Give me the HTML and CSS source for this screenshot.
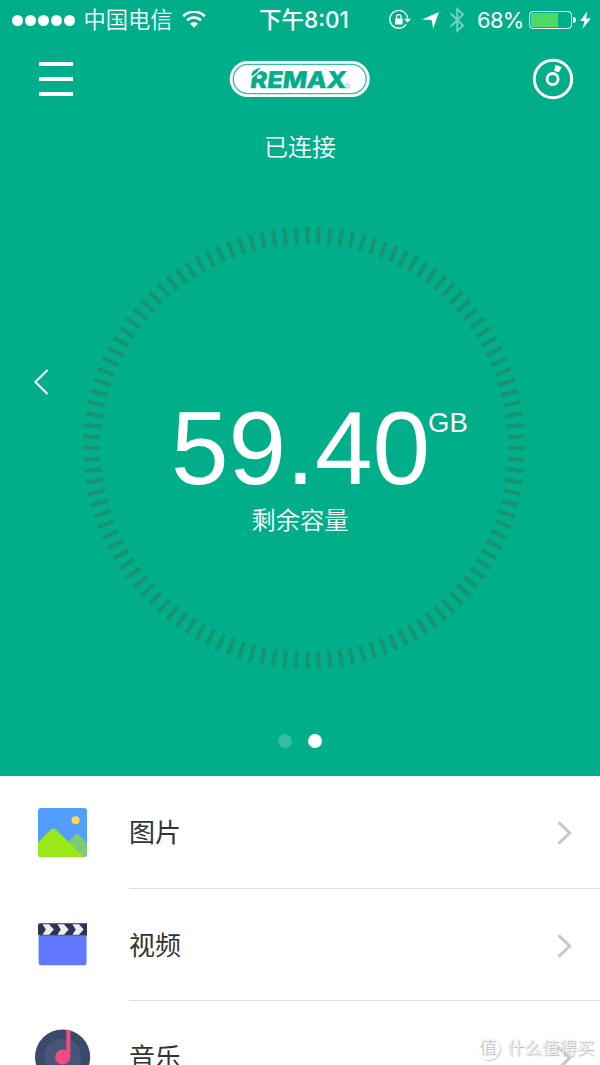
FILE: index.html
```
<!DOCTYPE html>
<html lang="zh-CN">
<head>
  <meta charset="UTF-8" />
  <meta name="viewport" content="width=device-width, initial-scale=1" />
  <title>REMAX</title>
  <link rel="stylesheet" href="styles.css">
</head>
<body>
  <div class="hero">
    <div class="status-bar">
      <div class="status-left">
        <div class="signal"><i></i><i></i><i></i><i></i><i></i></div>
        <span class="carrier">中国电信</span>
        <svg class="wifi" width="24" height="18" viewBox="0 0 24 18">
          <path d="M1.2 5.2a15.5 15.5 0 0 1 21.6 0" fill="none" stroke="#fff" stroke-width="2.6"/>
          <path d="M5 9.4a10 10 0 0 1 14 0" fill="none" stroke="#fff" stroke-width="2.5"/>
          <path d="M12 16.8 7.9 12.6a6 6 0 0 1 8.2 0z" fill="#fff"/>
        </svg>
      </div>
      <div class="time">下午8:01</div>
      <div class="status-right">
        <svg width="22" height="20" viewBox="0 0 22 20">
          <path d="M17.2 14.2a8.9 8.9 0 1 1 1.4-5.5" fill="none" stroke="#fff" stroke-width="1.3"/>
          <path d="M15 8.8h7l-3.5 4z" fill="#fff"/>
          <rect x="6" y="8.6" width="7.6" height="5.8" rx=".6" fill="#fff"/>
          <path d="M7.5 9V6.9a2.3 2.3 0 0 1 4.6 0V9" fill="none" stroke="#fff" stroke-width="1.2"/>
        </svg>
        <svg class="arrow" width="17" height="17" viewBox="0 0 17 17">
          <path d="M16.9 0 11.2 16.8 9.6 8.1 0 7.6z" fill="#fff"/>
        </svg>
        <svg class="bluetooth" width="15" height="26" viewBox="0 0 15 26">
          <path d="M.8 6.5 13 18.6 7.2 24V2L13 7.4.8 19.5" fill="none" stroke="#fff" stroke-width="1.9"/>
        </svg>
        <span class="percent">68%</span>
        <div class="battery"><span></span></div>
        <i class="nub"></i>
        <svg class="bolt" width="11" height="18" viewBox="0 0 11 18">
          <path d="M7.2.2.2 9.9h4.3L2.6 17.8 10.8 7.4H6.1z" fill="#fff"/>
        </svg>
      </div>
    </div>

    <div class="nav">
      <div class="menu"><i></i><i></i><i></i></div>
      <svg class="logo" width="142" height="38" viewBox="0 0 142 38">
        <rect x=".7" y="1" width="140" height="36" rx="18" fill="#fff"/>
        <rect x="4.2" y="4.4" width="133" height="29.2" rx="14.6" fill="#fff" stroke="#35bd9d" stroke-width="1.3"/>
        <text class="logo-text" transform="translate(20.5 27.8) skewX(-7)" textLength="96" lengthAdjust="spacingAndGlyphs">REMAX</text>
        <path d="M20 20 32 9.5" stroke="#fff" stroke-width="1.4"/>
        <path d="M22.3 14.5Q24 9 32 7.8L23 16z" fill="#01ae8a"/>
        <circle cx="118.3" cy="26" r="2" fill="none" stroke="#7ad3be" stroke-width="1"/>
      </svg>
      <svg class="disc" width="42" height="42" viewBox="0 0 42 42">
        <circle cx="21" cy="21" r="18.7" fill="none" stroke="#fff" stroke-width="3"/>
        <circle cx="20.6" cy="21" r="5.5" fill="none" stroke="#fff" stroke-width="2.8"/>
        <path d="M23.6 6.8 29.7 9.2 26.8 14.3 22.2 12.9z" fill="#fff"/>
      </svg>
    </div>

    <div class="connected">已连接</div>

    <div class="dial-row">
      <svg class="prev" width="17" height="28" viewBox="0 0 17 28">
        <path d="M14.5 2 2.4 14l12.1 12" fill="none" stroke="#fff" stroke-width="2"/>
      </svg>
      <div class="dial">
        <svg id="ticks" width="446" height="446" viewBox="-223 -223 446 446"></svg>
        <div class="reading">
          <div class="amount"><span>59.40</span><sup>GB</sup></div>
          <div class="caption">剩余容量</div>
        </div>
      </div>
    </div>

    <div class="pager"><i></i><i class="active"></i></div>
  </div>

  <div class="list">
    <div class="item">
      <svg class="icon" width="56" height="56" viewBox="0 0 56 56">
        <defs><clipPath id="photo"><rect x="3" y="4" width="49" height="49" rx="3"/></clipPath></defs>
        <g clip-path="url(#photo)">
          <rect x="3" y="4" width="50" height="50" fill="#529dff"/>
          <circle cx="40.6" cy="16.2" r="4" fill="#fddb4b"/>
          <path d="M31 41 39.4 31.5Q42 28.6 44.6 31.5L53 40v14H42z" fill="#7ccb79"/>
          <path d="M3 38.5 15.3 26.3Q18.4 23.4 21.5 26.3L50 54H3z" fill="#98e81a"/>
        </g>
      </svg>
      <div class="row"><span>图片</span>
        <svg class="chevron" width="17" height="26" viewBox="0 0 17 26"><path d="M2.5 2.3 13.7 13 2.5 23.7" fill="none" stroke="#c7c7cc" stroke-width="3"/></svg>
      </div>
    </div>
    <div class="item">
      <svg class="icon" width="56" height="56" viewBox="0 0 56 56">
        <path d="M3.6 19h48v26.8a2.5 2.5 0 0 1-2.5 2.5h-43a2.5 2.5 0 0 1-2.5-2.5z" fill="#6179ff"/>
        <path d="M3 8.3a2 2 0 0 1 2-2h47v12.4H5a2 2 0 0 1-2-2z" fill="#2c3652"/>
        <path d="M7.5 7.3h6.7l4.6 5.2-4.6 5.3H7.5l3.4-5.3zM22.4 7.3H29l4.6 5.2-4.6 5.3h-6.6l3.4-5.3zM37.4 7.3H44l4.6 5.2-4.6 5.3h-6.6l3.4-5.3z" fill="#eee"/>
      </svg>
      <div class="row"><span>视频</span>
        <svg class="chevron" width="17" height="26" viewBox="0 0 17 26"><path d="M2.5 2.3 13.7 13 2.5 23.7" fill="none" stroke="#c7c7cc" stroke-width="3"/></svg>
      </div>
    </div>
    <div class="item">
      <svg class="icon" width="56" height="56" viewBox="0 0 56 56">
        <circle cx="27.6" cy="28" r="27.6" fill="#3b4a69"/>
        <circle cx="27.6" cy="28" r="18.5" fill="#475577"/>
        <path d="M31.3.8 35.4 1.6V28h-4.1z" fill="#f34b82"/>
        <circle cx="27.7" cy="28" r="7.6" fill="#f34b82"/>
      </svg>
      <div class="row"><span>音乐</span>
        <svg class="chevron" width="17" height="26" viewBox="0 0 17 26"><path d="M2.5 2.3 13.7 13 2.5 23.7" fill="none" stroke="#c7c7cc" stroke-width="3"/></svg>
      </div>
    </div>
  </div>

  <div class="watermark"><b>值</b><span>什么值得买</span></div>

  <script>
    // 120 ticks, one every 3 degrees
    const ticks = document.getElementById("ticks");
    let lines = "";
    for (let i = 0; i < 120; i++) {
      const a = i * 3 * Math.PI / 180;
      const c = Math.cos(a);
      const s = Math.sin(a);
      const shift = 3.4 * s * s;
      lines += `<line x1="${204 * c + shift}" y1="${204 * s}" x2="${221 * c + shift}" y2="${221 * s}" />`;
    }
    ticks.innerHTML = lines;
  </script>
</body>
</html>
```
FILE: styles.css
```
* {
  box-sizing: border-box;
}

body {
  margin: 0;
  width: 600px;
  height: 1065px;
  overflow: hidden;
  position: relative;
  background: #fff;
  font-family: Inter, "Noto Sans CJK SC", sans-serif;
}

svg {
  display: block;
  flex: none;
}

.hero {
  height: 776px;
  background: #01ae8a;
  color: #fff;
}

.status-bar {
  height: 40px;
  display: grid;
  grid-template-columns: 246px 116px 1fr;
  align-items: center;
  font-size: 22px;
  line-height: 40px;
}

.status-left,
.status-right {
  display: flex;
  align-items: center;
  height: 38px;
}

.status-left {
  padding-left: 12px;
}

.signal {
  display: flex;
  gap: 2.1px;
  margin-right: 8px;
}

.signal i {
  width: 11px;
  height: 11px;
  border-radius: 50%;
  background: #fff;
}

.carrier {
  font-size: 22.3px;
  font-weight: 350;
}

.wifi {
  margin-left: 9px;
}

.time {
  text-align: center;
  font-size: 22.5px;
  font-weight: 500;
  white-space: nowrap;
}

.status-right {
  padding-left: 27px;
}

.arrow {
  margin-left: 11px;
}

.bluetooth {
  margin-left: 11px;
  opacity: 0.45;
}

.percent {
  width: 47px;
  margin-left: 12px;
  font-size: 22px;
  letter-spacing: -0.7px;
}

.battery {
  width: 43px;
  height: 18px;
  margin-left: 5px;
  border: 1px solid #fff;
  border-radius: 4px;
  padding: 1px;
}

.battery span {
  display: block;
  width: 27px;
  height: 14px;
  border-radius: 2px 0 0 2px;
  background: #4cd964;
}

.nub {
  width: 3px;
  height: 6px;
  margin-left: 1px;
  border-radius: 0 3px 3px 0;
  background: #fff;
}

.bolt {
  margin-left: 4px;
}

.nav {
  height: 78px;
  display: flex;
  align-items: center;
  padding: 0 26px 0 39px;
}

.menu {
  width: 34px;
  display: flex;
  flex-direction: column;
  gap: 11px;
}

.menu i {
  height: 4px;
  background: #fff;
}

.logo {
  margin-left: 156px;
}

.logo-text {
  font-family: Inter, sans-serif;
  font-size: 23px;
  font-weight: 800;
  fill: #01ae8a;
  stroke: #01ae8a;
  stroke-width: 0.5;
}

.disc {
  margin-left: auto;
}

.connected {
  height: 58px;
  line-height: 60px;
  text-align: center;
  font-size: 24px;
  font-weight: 350;
}

.dial-row {
  height: 546px;
  display: flex;
}

.prev {
  margin: 192px 32px 0 33px;
}

.dial {
  width: 446px;
  height: 446px;
  margin: 49px 0 0 -1px;
  display: grid;
}

.dial > * {
  grid-area: 1 / 1;
}

#ticks line {
  stroke: #169370;
  stroke-width: 4;
}

.reading {
  padding-top: 171px;
}

.amount {
  display: flex;
  padding-left: 90px;
  font-family: "Liberation Sans", sans-serif;
  font-size: 103.5px;
  line-height: 104px;
}

.amount sup {
  font-size: 27.5px;
  line-height: 32px;
  padding-top: 11px;
  margin-left: -2px;
}

.caption {
  margin: 2px 0 0 -8px;
  text-align: center;
  font-size: 24.3px;
  font-weight: 350;
  line-height: 36px;
}

.pager {
  display: flex;
  justify-content: center;
  gap: 16px;
  margin-top: 12px;
}

.pager i {
  width: 14px;
  height: 14px;
  border-radius: 50%;
  background: #fff;
  opacity: 0.2;
}

.pager .active {
  opacity: 1;
}

.item {
  height: 112.5px;
  display: flex;
  align-items: center;
  padding-left: 35px;
}

.row {
  flex: 1;
  height: 100%;
  margin-left: 38px;
  padding-right: 27px;
  display: flex;
  align-items: center;
  justify-content: space-between;
  border-bottom: 1px solid #dfdfe1;
  font-size: 26px;
  color: #333;
}

.row span {
  padding-bottom: 2px;
}

.chevron {
  margin-top: 3px;
}

.watermark {
  position: absolute;
  left: 477px;
  top: 1036px;
  display: flex;
  align-items: center;
  gap: 7px;
  font-size: 17.5px;
  font-weight: 350;
  line-height: 24px;
  color: #f4f4f4;
  text-shadow: 1px 1px 1px #bbb, 0 0 1px #ccc;
  white-space: nowrap;
}

.watermark b {
  width: 23px;
  height: 23px;
  line-height: 21px;
  text-align: center;
  font-weight: 400;
  color: #ccc;
  text-shadow: none;
  border-radius: 50%;
  box-shadow: 1px 1px 1px #ccc;
}
```
